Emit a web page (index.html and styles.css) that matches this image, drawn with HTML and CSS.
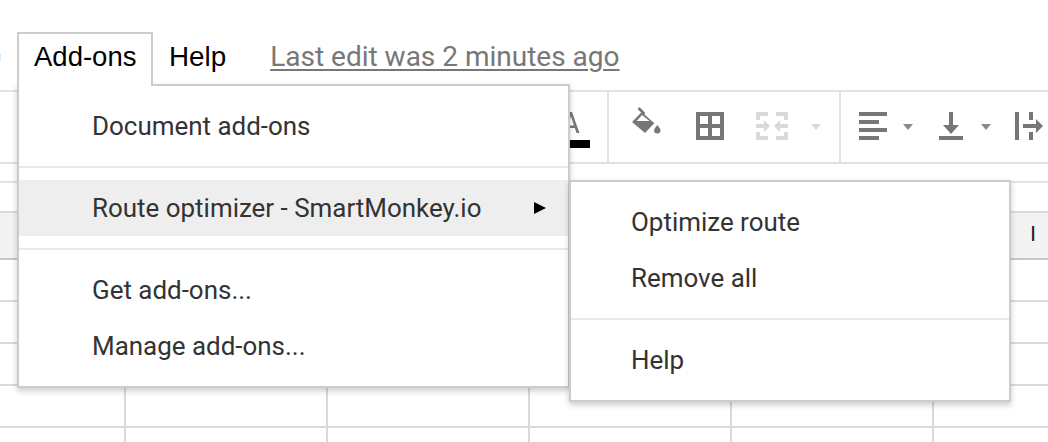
FILE: index.html
```html
<!DOCTYPE html>
<html lang="en">
<head>
<meta charset="utf-8">
<title>Add-ons menu</title>
<link rel="stylesheet" href="styles.css">
</head>
<body>
<div class="app">
  <header class="menubar">
    <div class="prev-menu-edge"></div>
    <div class="tab">Add-ons</div>
    <div class="menu-label">Help</div>
    <a class="last-edit">Last edit was 2 minutes ago</a>
  </header>

  <div class="toolbar">
    <div class="group group-color">
      <svg class="ico-color" width="30" height="40" viewBox="0 0 30 40"><path d="M9 4h3l7.500 21h-3l-1.700-5H7.700L6 25H3zM8.600 17.500h5.300L11 8z" fill="#777" fill-rule="evenodd"/><rect x="2" y="32" width="28" height="8" fill="#000"/></svg>
    </div>
    <div class="group group-cell">
      <svg class="ico-fill" width="30" height="28" viewBox="0 0 30 28"><path d="M0 15L9.700 5 22.300 16.300 13 26zM4.700 14L10 8 17.500 14z" fill="#777" fill-rule="evenodd"/><path d="M6.500 1L12.500 7" stroke="#777" stroke-width="2.600" fill="none"/><path d="M25.300 18c1.900 2.400 3.200 3.800 3.200 5.300a3.200 3.200 0 0 1-6.400 0c0-1.500 1.300-2.900 3.200-5.300z" fill="#777"/></svg>
      <svg class="ico-borders" width="28" height="28" viewBox="0 0 28 28"><path d="M0 0h28v28H0zM4 4v8h8V4zM16 4v8h8V4zM4 16v8h8v-8zM16 16v8h8v-8z" fill="#777" fill-rule="evenodd"/></svg>
      <svg class="ico-merge" width="32" height="28" viewBox="0 0 32 28"><path d="M0 0h12v4H4v4H0zM20 0h12v8h-4V4h-8zM0 20h4v4h8v4H0zM28 20h4v8H20v-4h8zM0 12h8V8l6 6-6 6v-4H0zM32 12h-8V8l-6 6 6 6v-4h8z" fill="#d9d9d9"/></svg>
      <span class="caret caret-off"></span>
    </div>
    <div class="group group-align">
      <svg class="ico-align" width="28" height="28" viewBox="0 0 28 28"><path d="M0 0h28v4H0zM0 8h20v4H0zM0 16h28v4H0zM0 24h20v4H0z" fill="#777"/></svg>
      <span class="caret"></span>
      <svg class="ico-valign" width="24" height="28" viewBox="0 0 24 28"><path d="M10 0h4v13h6l-8 9-8-9h6zM0 24h24v4H0z" fill="#777"/></svg>
      <span class="caret"></span>
      <svg class="ico-wrap" width="28" height="28" viewBox="0 0 28 28"><path d="M0 0h4v28H0zM14 0h4v8h-4zM14 20h4v8h-4zM8 12h13V7l7 7-7 7v-5H8z" fill="#777"/></svg>
    </div>
  </div>

  <div class="formula-bar"></div>

  <div class="sheet">
    <div class="col-heads">
      <div class="head"></div><div class="head"></div><div class="head"></div><div class="head"></div><div class="head"></div>
      <div class="head head-last">I</div>
    </div>
    <div class="row"><div class="cell"></div><div class="cell"></div><div class="cell"></div><div class="cell"></div><div class="cell"></div><div class="cell"></div></div>
    <div class="row"><div class="cell"></div><div class="cell"></div><div class="cell"></div><div class="cell"></div><div class="cell"></div><div class="cell"></div></div>
    <div class="row"><div class="cell"></div><div class="cell"></div><div class="cell"></div><div class="cell"></div><div class="cell"></div><div class="cell"></div></div>
    <div class="row"><div class="cell"></div><div class="cell"></div><div class="cell"></div><div class="cell"></div><div class="cell"></div><div class="cell"></div></div>
    <div class="row"><div class="cell"></div><div class="cell"></div><div class="cell"></div><div class="cell"></div><div class="cell"></div><div class="cell"></div></div>
  </div>

  <nav class="menu menu-main">
    <div class="item">Document add-ons</div>
    <div class="sep"></div>
    <div class="item item-active">Route optimizer - SmartMonkey.io<span class="arrow"></span></div>
    <div class="sep"></div>
    <div class="item">Get add-ons...</div>
    <div class="item">Manage add-ons...</div>
  </nav>

  <nav class="menu menu-sub">
    <div class="item">Optimize route</div>
    <div class="item">Remove all</div>
    <div class="sep"></div>
    <div class="item">Help</div>
  </nav>
</div>
</body>
</html>
```
FILE: styles.css
```css
* { box-sizing: border-box; }
html, body { margin: 0; padding: 0; background: #fff; }
body { width: 1048px; height: 442px; overflow: hidden; }

.app { position: relative; width: 1048px; height: 442px; overflow: hidden; }

.menubar {
  display: flex;
  align-items: flex-start;
  height: 92px;
  padding: 32px 0 0 17px;
  border-bottom: 2px solid #e2e2e2;
}
.prev-menu-edge {
  flex: none;
  width: 1px;
  height: 7px;
  margin: 22px 16px 0 -17px;
  background: #cfeaff;
}
.tab {
  position: relative;
  z-index: 5;
  flex: none;
  width: 136px;
  height: 54px;
  padding: 5px 0 0 15px;
  background: #fff;
  border: 2px solid #ccc;
  border-bottom: 0;
  font: 27.5px/36px "Liberation Sans", Arial, sans-serif;
  color: #000;
}
.menu-label {
  margin-left: 16px;
  padding-top: 7px;
  font: 27.8px/36px "Liberation Sans", Arial, sans-serif;
  color: #000;
}
.last-edit {
  margin-left: 44px;
  padding-top: 7px;
  font: 28px/36px Roboto, sans-serif;
  color: #777;
  text-decoration: underline;
  text-decoration-thickness: 2px;
  text-underline-offset: 3px;
}

.toolbar {
  display: flex;
  height: 72px;
  padding-left: 560px;
  border-bottom: 2px solid #e2e2e2;
}
.group { display: flex; align-items: flex-start; height: 70px; padding-top: 20px; }
.group svg { display: block; flex: none; }
.group-color { width: 49px; border-right: 2px solid #e2e2e2; }
.group-cell { width: 232px; border-right: 2px solid #e2e2e2; padding-left: 23px; }
.group-align { padding-left: 18px; }

.ico-color { margin-top: -4px; }
.ico-fill { margin-top: -5px; }
.ico-borders { margin-left: 34px; }
.ico-merge { margin-left: 32px; }
.ico-wrap { margin-left: 24px; }
.caret {
  flex: none;
  width: 0;
  height: 0;
  margin: 12px 0 0 16px;
  border-left: 5px solid transparent;
  border-right: 5px solid transparent;
  border-top: 6px solid #8a8a8a;
}
.caret-off { margin-left: 23px; border-top-color: #d9d9d9; }
.ico-valign { margin-left: 26px; }
.ico-valign + .caret { margin-left: 18px; }

.formula-bar { height: 19px; border-bottom: 2px solid #e2e2e2; }

.sheet { padding-top: 28px; }
.col-heads, .row {
  display: grid;
  grid-template-columns: 126px repeat(5, 202px);
}
.col-heads {
  height: 49px;
  background: #f3f3f3;
  border-top: 2px solid #d9d9d9;
  border-bottom: 2px solid #c6c6c6;
}
.head {
  border-right: 2px solid #d9d9d9;
  font: 22px/42px "Liberation Sans", Arial, sans-serif;
  color: #222;
}
.head-last { padding-left: 96px; border-right: 0; }
.row { height: 42px; border-bottom: 2px solid #d9d9d9; }
.cell { border-right: 2px solid #d9d9d9; }

.menu {
  position: absolute;
  background: #fff;
  border: 2px solid #ccc;
  padding: 12px 0;
  box-shadow: 0 3px 6px rgba(0, 0, 0, .2);
  font: 25.95px/56px Roboto, sans-serif;
  color: #333;
}
.menu-main { left: 17px; top: 84px; width: 553px; height: 304px; z-index: 3; }
.menu-sub { left: 569px; top: 180px; width: 442px; height: 222px; z-index: 4; }
.item { position: relative; height: 56px; padding-left: 73px; white-space: nowrap; }
.menu-sub .item { padding-left: 60px; }
.item-active { background: #eee; }
.arrow {
  position: absolute;
  right: 22px;
  top: 22px;
  border-top: 6px solid transparent;
  border-bottom: 6px solid transparent;
  border-left: 12px solid #000;
}
.sep { height: 2px; margin: 12px 0; background: #e9e9e9; }
```
